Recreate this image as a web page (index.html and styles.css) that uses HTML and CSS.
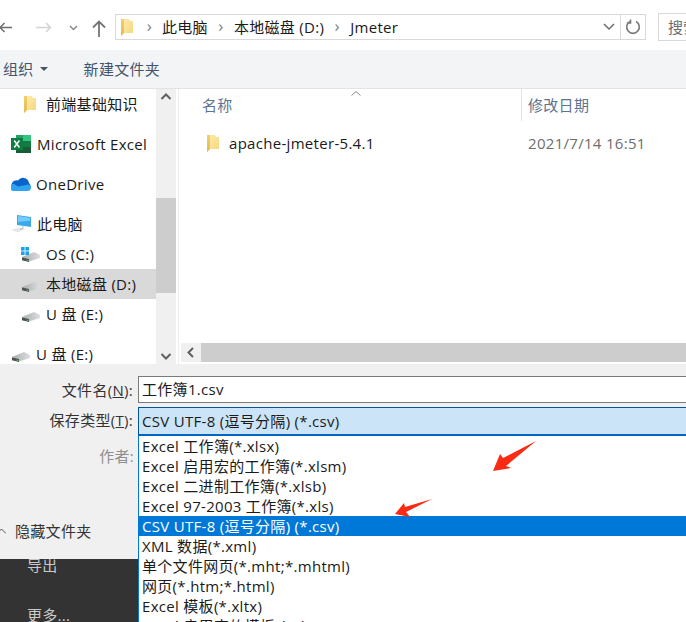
FILE: index.html
```html
<!DOCTYPE html>
<html lang="zh">
<head>
<meta charset="utf-8">
<title>另存为</title>
<link rel="stylesheet" href="styles.css">
</head>
<body>
<svg class="defs" width="0" height="0">
  <defs>
    <linearGradient id="fold" x1="0" y1="0" x2="1" y2="1"><stop offset="0" stop-color="#fdeeb4"/><stop offset="1" stop-color="#f6d677"/></linearGradient>
    <linearGradient id="foldside" x1="0" y1="0" x2="0" y2="1"><stop offset="0" stop-color="#f3cf6b"/><stop offset="1" stop-color="#e6b94f"/></linearGradient>
    <linearGradient id="drv" x1="0" y1="0" x2="1" y2="0"><stop offset="0" stop-color="#a9acae"/><stop offset="1" stop-color="#dddedf"/></linearGradient>
    <symbol id="folder" viewBox="0 0 12 18"><path d="M0 1h8l1 2h3v12H3l-3 3z" fill="url(#fold)"/><path d="M0 1h3v14l-3 3z" fill="url(#foldside)"/></symbol>
    <symbol id="disk" viewBox="0 0 18 10"><path d="M0 5L12 0l6 3v3L7 9.500 0 8z" fill="url(#drv)"/><path d="M0 5.500l7 1.500v3L0 8.300z" fill="#4d5154"/><path d="M4.500 7.500l2 .4v1.200l-2-.4z" fill="#4cc04a"/></symbol>
  </defs>
</svg>
<div class="page">
  <header class="nav">
    <svg class="nav-icon" width="112" height="24" viewBox="0 0 112 24">
      <path d="M12 11.500H0M4.500 7L0 11.500 4.500 16" fill="none" stroke="#6d6d6d" stroke-width="1.500"/>
      <path d="M36 11.500H50M46 7l4.500 4.500L46 16" fill="none" stroke="#d4d4d4" stroke-width="1.500"/>
      <path d="M70 10l3.500 3.500L77 10" fill="none" stroke="#8a8a8a" stroke-width="1.500"/>
      <path d="M99 21V6M93 11.500L99 5.500l6 6" fill="none" stroke="#757575" stroke-width="1.800"/>
    </svg>
    <div class="address">
      <svg class="addr-folder" width="12" height="18"><use href="#folder"/></svg>
      <span class="crumb-sep first">›</span><span class="crumb">此电脑</span>
      <span class="crumb-sep second">›</span><span class="crumb">本地磁盘 (D:)</span>
      <span class="crumb-sep second">›</span><span class="crumb">Jmeter</span>
      <span class="addr-fill"></span>
      <svg class="addr-drop" width="12" height="8" viewBox="0 0 12 8"><path d="M1 1l5 5 5-5" fill="none" stroke="#6d6d6d" stroke-width="1.500"/></svg>
      <span class="addr-refresh"><svg width="16" height="16" viewBox="0 0 16 16"><path d="M5 2.500A6.300 6.300 0 1 0 11 2.500M5.500 0.500V4H1.800" fill="none" stroke="#7a7a7a" stroke-width="1.600"/></svg></span>
    </div>
    <div class="search">搜索</div>
  </header>

  <div class="commands">
    <span class="cmd-org">组织</span><span class="cmd-caret"></span>
    <span class="cmd-new">新建文件夹</span>
  </div>

  <main class="browser">
    <aside class="tree">
      <ul class="tree-list">
        <li class="tree-item level2 first-row"><svg class="ico-folder" width="12" height="18"><use href="#folder"/></svg><span>前端基础知识</span></li>
        <li class="tree-item level1 gap"><svg width="20" height="18" viewBox="0 0 20 18"><rect x="5" width="15" height="18" fill="#21a366"/><rect x="12" y="6" width="8" height="6" fill="#107c41"/><rect x="5" y="12" width="15" height="6" fill="#185c37"/><rect x="12" width="8" height="6" fill="#33c481"/><rect y="3" width="12" height="12" fill="#107c41"/><path d="M3.200 5.500l5.200 7M8.400 5.500l-5.200 7" stroke="#fff" stroke-width="1.500"/></svg><span>Microsoft Excel</span></li>
        <li class="tree-item level1 gap onedrive"><svg width="20" height="14" viewBox="0 0 20 14"><path d="M4 13h12a4 4 0 0 0 2-7 6 6 0 0 0-11-2.500A4.500 4.500 0 0 0 4 13z" fill="#0a64c8"/><path d="M4 14h12.500a3.300 3.300 0 0 0 1-6.500L7 9.500 3 7a3.500 3.500 0 0 0 0 7z" fill="#2ea3f0"/></svg><span>OneDrive</span></li>
        <li class="tree-item level1 gap"><svg width="20" height="18" viewBox="0 0 20 18"><path d="M6 0l14 2v10L6 10z" fill="#3aa8ea"/><path d="M7 1l12 1.700v3L7 7z" fill="#74cbf7"/><path d="M0 15l8-2.500 6 1.500-7 3.500z" fill="#e4e6e8"/><path d="M12 11v2.500l-3 .8" stroke="#b9bdc1" fill="none"/></svg><span>此电脑</span></li>
        <li class="tree-item level2 os"><svg class="win" width="8" height="8" viewBox="0 0 8 8"><rect width="3.600" height="3.600" fill="#17a2ea"/><rect x="4.400" width="3.600" height="3.600" fill="#17a2ea"/><rect y="4.400" width="3.600" height="3.600" fill="#17a2ea"/><rect x="4.400" y="4.400" width="3.600" height="3.600" fill="#17a2ea"/></svg><svg class="drive" width="18" height="10"><use href="#disk"/></svg><span>OS (C:)</span></li>
        <li class="tree-item level2 selected"><svg class="drive" width="18" height="10"><use href="#disk"/></svg><span>本地磁盘 (D:)</span></li>
        <li class="tree-item level2"><svg class="drive" width="18" height="10"><use href="#disk"/></svg><span>U 盘 (E:)</span></li>
        <li class="tree-item level1 gap"><svg class="drive" width="18" height="10"><use href="#disk"/></svg><span>U 盘 (E:)</span></li>
      </ul>
    </aside>
    <div class="vscroll">
      <svg class="scroll-btn" width="20" height="16" viewBox="0 0 20 16"><path d="M5.500 10L10 5.500 14.500 10" fill="none" stroke="#606060" stroke-width="2"/></svg>
      <div class="vtrack"><div class="vthumb"></div></div>
      <svg class="scroll-btn" width="20" height="16" viewBox="0 0 20 16"><path d="M5.500 6L10 10.500 14.500 6" fill="none" stroke="#606060" stroke-width="2"/></svg>
    </div>
    <section class="files">
      <div class="col-head">
        <div class="col-name">名称<svg class="sort" width="10" height="5" viewBox="0 0 10 5"><path d="M.5 4.500L5 .5l4.500 4" fill="none" stroke="#8a8a8a"/></svg></div>
        <div class="col-date">修改日期</div>
      </div>
      <div class="file-row">
        <svg width="12" height="18"><use href="#folder"/></svg>
        <span class="file-name">apache-jmeter-5.4.1</span>
        <span class="file-date">2021/7/14 16:51</span>
      </div>
      <div class="file-space"></div>
      <div class="hscroll"><svg width="20" height="19" viewBox="0 0 20 19"><path d="M12 5L7.500 9.500 12 14" fill="none" stroke="#606060" stroke-width="2"/></svg></div>
    </section>
  </main>

  <div class="lower">
    <div class="labels">
      <div class="panel">
        <div class="lbl lbl-file">文件名(<u>N</u>):</div>
        <div class="lbl lbl-type">保存类型(<u>T</u>):</div>
        <div class="lbl lbl-author">作者:</div>
        <div class="hide-row"><svg width="9" height="6" viewBox="0 0 9 6"><path d="M0 5.500L4.500 1 9 5.500" fill="none" stroke="#555"/></svg><span>隐藏文件夹</span></div>
      </div>
      <div class="backstage">
        <div>导出</div>
        <div class="more">更多...</div>
      </div>
    </div>
    <div class="fields">
      <div class="filename">工作簿1.csv</div>
      <div class="filetype">CSV UTF-8 (逗号分隔) (*.csv)</div>
      <ul class="options">
        <li>Excel 工作簿(*.xlsx)</li>
        <li>Excel 启用宏的工作簿(*.xlsm)</li>
        <li>Excel 二进制工作簿(*.xlsb)</li>
        <li>Excel 97-2003 工作簿(*.xls)</li>
        <li class="active">CSV UTF-8 (逗号分隔) (*.csv)</li>
        <li>XML 数据(*.xml)</li>
        <li>单个文件网页(*.mht;*.mhtml)</li>
        <li>网页(*.htm;*.html)</li>
        <li>Excel 模板(*.xltx)</li>
        <li>Excel 启用宏的模板(*.xltm)</li>
      </ul>
    </div>
  </div>

  <svg class="arrows" width="686" height="622" viewBox="0 0 686 622">
    <path d="M536 441L503 458 500 454 493 471 511 468 506 466z" fill="#fb2a14"/>
    <path d="M432 499L405 507 404 503 395 514 410 517 406 512z" fill="#fb2a14"/>
  </svg>
</div>
</body>
</html>
```

FILE: styles.css
```css
* { box-sizing: border-box; }
html, body { margin: 0; padding: 0; }
body { background: #fff; overflow: hidden; }
.defs { position: absolute; }
.page {
  position: relative;
  width: 686px;
  height: 622px;
  overflow: hidden;
  display: flex;
  flex-direction: column;
  font: 15px/20px "Open Sans", "Noto Sans CJK SC", sans-serif;
  letter-spacing: .3px;
  color: #1a1a1a;
}
ul { list-style: none; margin: 0; padding: 0; }

/* address bar */
.nav { height: 50px; flex: none; display: flex; align-items: flex-start; padding-top: 14px; background: #fff; position: relative; }
.nav-icon { flex: none; margin: 2px 3px 0 0; width: 112px; }
.address {
  flex: none; width: 531px; height: 26px; display: flex; align-items: center;
  border: 1px solid #d9d9d9; padding-left: 5px; white-space: nowrap;
}
.addr-folder { flex: none; }
.crumb-sep { color: #7d7d7d; width: 27px; text-align: center; font-size: 17px; margin: -3px 0 0; }
.crumb-sep.first { margin-left: 3px; margin-right: -1px; }
.crumb-sep.second { width: 26px; }
.addr-fill { flex: 1; }
.addr-drop { margin-right: 5px; }
.addr-refresh { width: 25px; height: 24px; border-left: 1px solid #d9d9d9; display: flex; align-items: center; justify-content: center; }
.search { flex: none; width: 40px; height: 28px; margin: -1px 0 0 12px; border: 1px solid #d9d9d9; border-right: 0; padding: 3px 0 0 9px; color: #6d6d6d; white-space: nowrap; overflow: hidden; }

/* command bar */
.commands { height: 39px; flex: none; background: #f3f4f6; border-bottom: 1px solid #e3e3e3; display: flex; align-items: center; color: #44546a; padding: 0 0 1px 3px; white-space: nowrap; }
.cmd-caret { width: 0; height: 0; border: 4px solid transparent; border-top: 4px solid #44546a; border-bottom: 0; margin: 1px 0 0 6px; }
.cmd-new { margin-left: 36px; }

/* browser */
.browser { height: 275px; flex: none; display: flex; background: #fff; }
.tree { width: 156px; flex: none; overflow: hidden; }
.tree-list { white-space: nowrap; }
.tree-item { height: 30px; display: flex; align-items: center; color: #1a1a1a; }
.tree-item.gap { margin-top: 10px; }
.tree-item svg { flex: none; }
.level1 { padding-left: 11px; }
.level1 svg { margin-right: 6px; }
.level1 .drive { margin-left: 1px; }
.onedrive svg { margin-right: 5px; }
.level2 { padding-left: 22px; position: relative; }
.level2 svg { margin-right: 6px; }
.first-row { padding-left: 24px; }
.first-row .ico-folder { margin-right: 10px; }
.level2.selected { background: #d9d9d9; }
.tree-item .drive { margin-top: 5px; }
.tree-item .win { position: absolute; left: 21px; top: 8px; }
.vscroll { width: 20px; flex: none; background: #f0f0f0; display: flex; flex-direction: column; }
.scroll-btn { flex: none; display: block; }
.vtrack { flex: 1; display: flex; flex-direction: column; padding-top: 93px; padding-bottom: 55px; }
.vthumb { flex: 1; background: #cdcdcd; }
.files { flex: 1; min-width: 0; margin-left: 2px; border-left: 1px solid #ededed; display: flex; flex-direction: column; }
.col-head { height: 32px; flex: none; display: flex; color: #5c7391; }
.col-name { width: 342px; padding: 6px 0 0 23px; position: relative; }
.sort { position: absolute; left: 172px; top: 2px; }
.col-date { flex: 1; border-left: 1px solid #e3e3e3; padding: 6px 0 0 6px; }
.file-row { height: 30px; flex: none; display: flex; align-items: center; padding-left: 28px; margin-top: 7px; white-space: nowrap; }
.file-name { margin-left: 10px; width: 299px; }
.file-date { color: #6d6d6d; }
.file-space { flex: 1; }
.hscroll { height: 19px; flex: none; margin: 0 0 2px 2px; background: #cdcdcd; }
.hscroll svg { display: block; background: #f0f0f0; }

/* lower part */
.lower { flex: 1; min-height: 0; display: flex; background: #f0f0f0; }
.labels { width: 138px; flex: none; display: flex; flex-direction: column; }
.panel { height: 195px; flex: none; background: #f0f0f0; position: relative; }
.lbl { text-align: right; padding-right: 5px; white-space: nowrap; color: #333; }
.lbl-file { padding-top: 16px; }
.lbl-type { padding-top: 10px; }
.lbl-author { padding-top: 16px; color: #8f8f8f; padding-right: 4px; }
.hide-row { display: flex; align-items: center; margin-top: 55px; margin-left: -3px; white-space: nowrap; color: #333; }
.hide-row svg { margin-right: 9px; }
.backstage { flex: 1; background: #333; color: #c9c9c9; padding-left: 27px; overflow: hidden; }
.backstage div { margin-top: -4px; }
.backstage .more { margin-top: 30px; }
.fields { flex: 1; min-width: 0; padding-top: 12px; white-space: nowrap; }
.filename { height: 27px; background: #fff; border: 1px solid #7a7a7a; border-right: 0; padding: 2px 0 0 3px; }
.filetype { height: 29px; margin-top: 4px; background: #cce4f7; border: 1px solid #005499; border-right: 0; border-bottom: 2px solid #0067c0; padding: 3px 0 0 3px; }
.options { background: #fff; border-left: 1px solid #0078d7; height: 200px; overflow: hidden; }
.options li { height: 20px; line-height: 20px; padding-left: 3px; }
.options li.active { background: #0078d7; color: #fff; }

.arrows { position: absolute; left: 0; top: 0; pointer-events: none; }
```
